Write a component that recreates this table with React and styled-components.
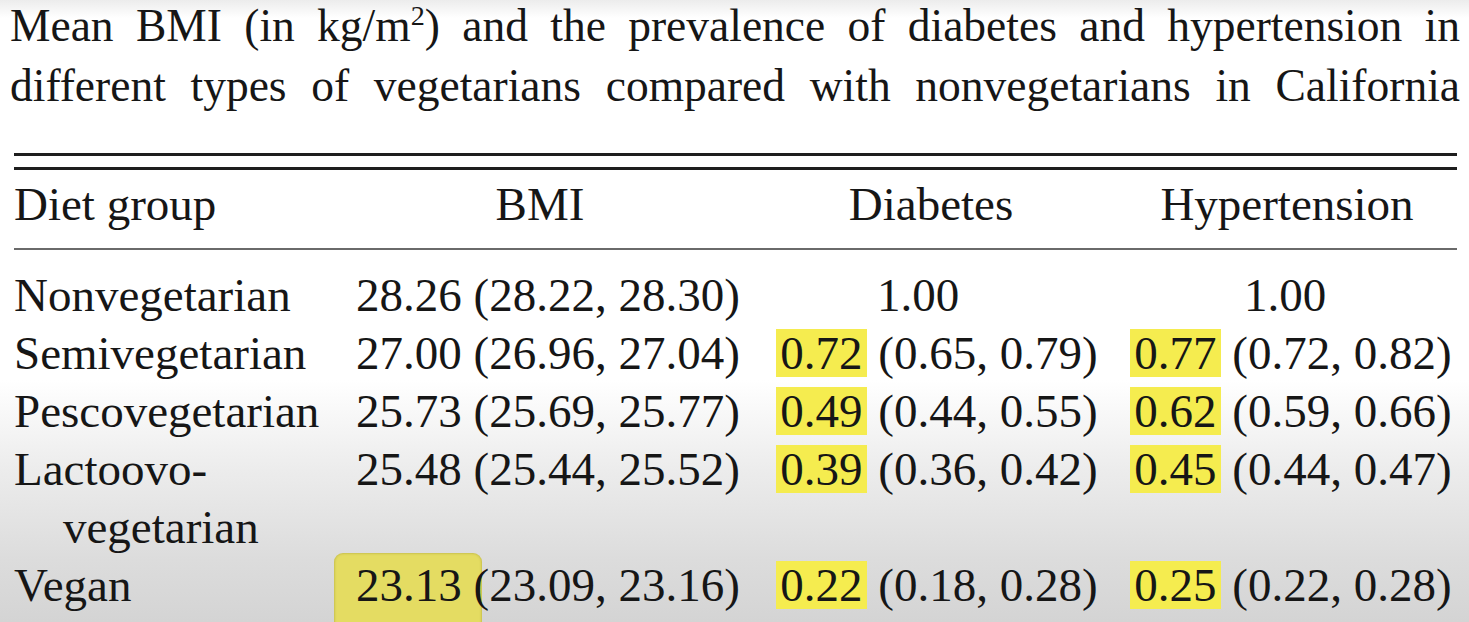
import React from 'react';
import styled, { createGlobalStyle, css } from 'styled-components';

const serif = css`
    font-family: "Liberation Serif", "Times New Roman", serif;
`;

const GlobalStyle = createGlobalStyle`
    html, body {
        margin: 0;
        padding: 0;
    }
    body {
        width: 1469px;
        height: 622px;
        overflow: hidden;
        color: #161616;
        background: linear-gradient(
            to bottom,
            #ececec 0px,
            #ffffff 18px,
            #ffffff 380px,
            #ececec 470px,
            #dcdcdc 560px,
            #d4d4d4 622px
        );
    }
`;

const Page = styled.div`
    display: flex;
    flex-direction: column;
    ${serif}
`;

const Caption = styled.div`
    display: flex;
    flex-direction: column;
    gap: 9px;
    padding-left: 10px;
    width: 1450px;
    font-size: 45.5px;
    line-height: 51px;
    ${serif}
`;

const CaptionLine = styled.div`
    ${serif}
    text-align: justify;
    text-align-last: justify;
    white-space: nowrap;
`;

const Sup = styled.sup`
    ${serif}
    font-size: 0.62em;
    line-height: 0;
    vertical-align: 0.58em;
`;

const Table = styled.div`
    ${serif}
    margin-top: 42px;
    margin-left: 14px;
    width: 1443px;
    display: grid;
    grid-template-columns: 321px 420px 362px 340px;
    font-size: 47px;
    line-height: 58px;
`;

const Rule = styled.div`
    grid-column: 1 / -1;
    height: ${p => p.$h}px;
    background: ${p => p.$color};
    margin-top: ${p => p.$top}px;
    margin-bottom: ${p => p.$bottom || 0}px;
`;

const Cell = styled.div`
    ${serif}
    text-align: ${p => p.$align || 'center'};
    white-space: nowrap;
    padding-left: ${p => p.$indent || 0}px;
    padding-right: ${p => p.$shiftLeft || 0}px;
`;

const Value = styled.span`
    ${serif}
    display: inline-block;
    line-height: 48px;
    padding: 0 4px;
    margin-left: -4px;
    background: ${p => (p.$mark ? '#f5ec4f' : 'transparent')};
`;

const Marker = styled.span`
    ${serif}
    position: relative;
    display: inline-block;

    &::before {
        content: '';
        position: absolute;
        left: -22px;
        right: -20px;
        top: -3px;
        bottom: -30px;
        border-radius: 9px;
        background: #e4dc62;
        box-shadow: inset 0 0 2px 1px rgba(150, 140, 40, 0.35);
        z-index: -1;
    }
`;

const rows = [
    {
        group: 'Nonvegetarian',
        bmi: ['28.26', '(28.22, 28.30)'],
        diabetes: null,
        hyper: null,
    },
    {
        group: 'Semivegetarian',
        bmi: ['27.00', '(26.96, 27.04)'],
        diabetes: ['0.72', '(0.65, 0.79)'],
        hyper: ['0.77', '(0.72, 0.82)'],
    },
    {
        group: 'Pescovegetarian',
        bmi: ['25.73', '(25.69, 25.77)'],
        diabetes: ['0.49', '(0.44, 0.55)'],
        hyper: ['0.62', '(0.59, 0.66)'],
    },
    {
        group: 'Lactoovo-',
        second: 'vegetarian',
        bmi: ['25.48', '(25.44, 25.52)'],
        diabetes: ['0.39', '(0.36, 0.42)'],
        hyper: ['0.45', '(0.44, 0.47)'],
    },
    {
        group: 'Vegan',
        bmi: ['23.13', '(23.09, 23.16)'],
        bmiMarked: true,
        diabetes: ['0.22', '(0.18, 0.28)'],
        hyper: ['0.25', '(0.22, 0.28)'],
    },
];

const Ratio = ({ data, shift, indent }) => {
    if (!data) {
        return <Cell $shiftLeft={shift}>1.00</Cell>;
    }
    return (
        <Cell $indent={indent}>
            <Value $mark>{data[0]}</Value> {data[1]}
        </Cell>
    );
};

const BodyRow = ({ row }) => (
    <>
        <Cell $align="left">{row.group}</Cell>
        <Cell $indent={6}>
            {row.bmiMarked ? <Marker>{row.bmi[0]}</Marker> : row.bmi[0]} {row.bmi[1]}
        </Cell>
        <Ratio data={row.diabetes} shift={36} indent={6} />
        <Ratio data={row.hyper} shift={4} indent={12} />
        {row.second && (
            <>
                <Cell $align="left" $indent={49}>{row.second}</Cell>
                <Cell />
                <Cell />
                <Cell />
            </>
        )}
    </>
);

export default function App() {
    return (
        <Page>
            <GlobalStyle />
            <Caption>
                <CaptionLine>
                    Mean BMI (in kg/m<Sup>2</Sup>) and the prevalence of diabetes and hypertension in
                </CaptionLine>
                <CaptionLine>
                    different types of vegetarians compared with nonvegetarians in California
                </CaptionLine>
            </Caption>
            <Table>
                <Rule $h={3} $color="#1e1e1e" $top={0} />
                <Rule $h={3} $color="#1e1e1e" $top={11} $bottom={5} />
                <Cell $align="left">Diet group</Cell>
                <Cell $shiftLeft={10}>BMI</Cell>
                <Cell $shiftLeft={10}>Diabetes</Cell>
                <Cell>Hypertension</Cell>
                <Rule $h={2} $color="#6a6a6a" $top={15} $bottom={16} />
                {rows.map(row => (
                    <BodyRow key={row.group} row={row} />
                ))}
            </Table>
        </Page>
    );
}
